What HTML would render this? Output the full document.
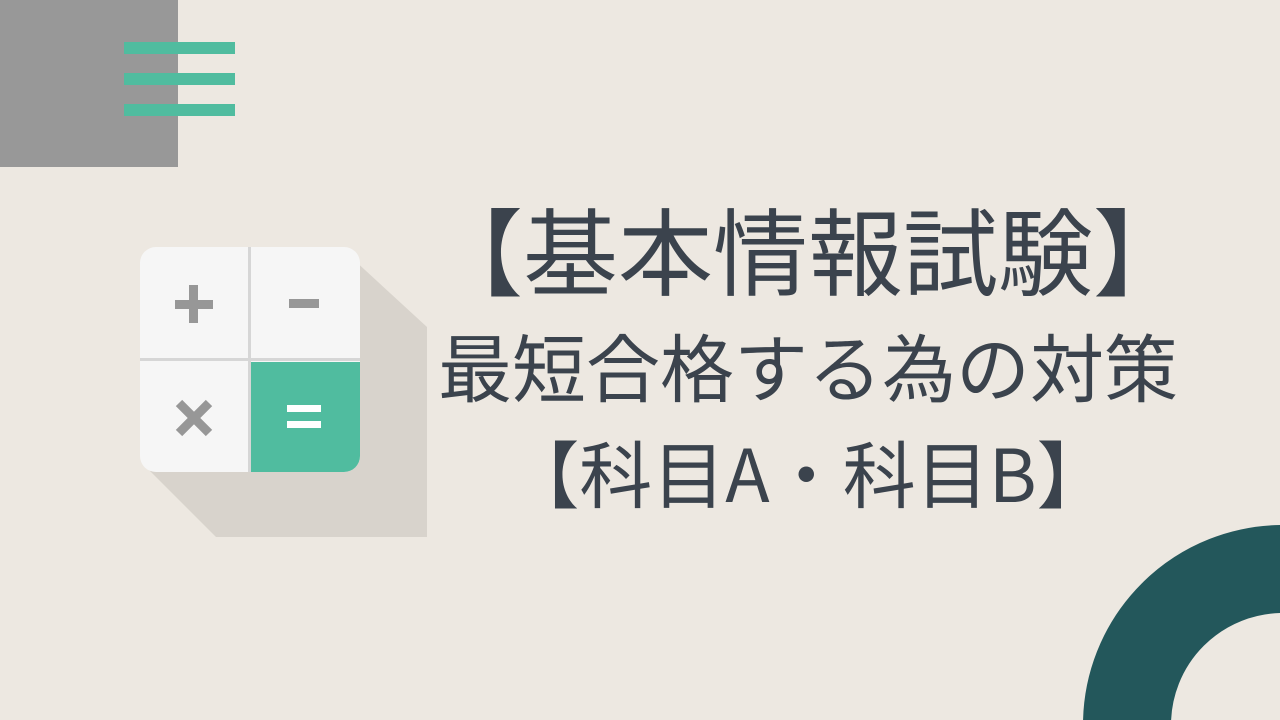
<!DOCTYPE html>
<html><head><meta charset="utf-8"><style>
html,body{margin:0;padding:0;overflow:hidden}
body{width:1280px;height:720px;overflow:hidden;background:#ede8e1;position:relative;font-family:"Liberation Sans","Noto Sans CJK JP",sans-serif}
.a{position:absolute}
.t{position:absolute;left:358px;width:900px;text-align:center;color:#3b434d;font-family:"Noto Sans CJK JP",sans-serif;white-space:nowrap}
</style></head><body>
<div class="a" style="left:0;top:0;width:178px;height:167px;background:#989898"></div>
<div class="a" style="left:124px;top:42px;width:111px;height:12px;background:#50bc9f"></div>
<div class="a" style="left:124px;top:73px;width:111px;height:12px;background:#50bc9f"></div>
<div class="a" style="left:124px;top:104px;width:111px;height:12px;background:#50bc9f"></div>

<svg class="a" style="left:0;top:0;display:block" width="1280" height="720">
<polygon points="340,247 427,327 427,537 216,537 145,466" fill="#d8d3cc"/>
<rect x="140" y="247" width="220" height="225" rx="16" fill="#f6f6f6"/>
<path d="M251,362 H360 V456 a16,16 0 0 1 -16,16 H251 Z" fill="#50bc9f"/>
<rect x="248" y="247" width="3" height="225" fill="#d6d6d6"/>
<rect x="140" y="358" width="220" height="3" fill="#d6d6d6"/>
<rect x="175" y="300" width="38" height="9" fill="#979797"/>
<rect x="189" y="285" width="9" height="38" fill="#979797"/>
<rect x="289" y="299" width="30" height="9" fill="#979797"/>
<path d="M179,403 L209,433 M209,403 L179,433" stroke="#979797" stroke-width="9"/>
<rect x="287" y="405" width="34" height="7" fill="#fff"/>
<rect x="287" y="421" width="34" height="7" fill="#fff"/>
<circle cx="1283" cy="725" r="156" fill="none" stroke="#23575b" stroke-width="88"/>
</svg>

<div class="t" style="top:198px;font-size:95px;line-height:100px">【基本情報試験】</div>
<div class="t" style="top:325px;font-size:74px;line-height:80px">最短合格する為の対策</div>
<div class="t" style="top:432px;font-size:73px;line-height:78px">【科目A・科目B】</div>
</body></html>
